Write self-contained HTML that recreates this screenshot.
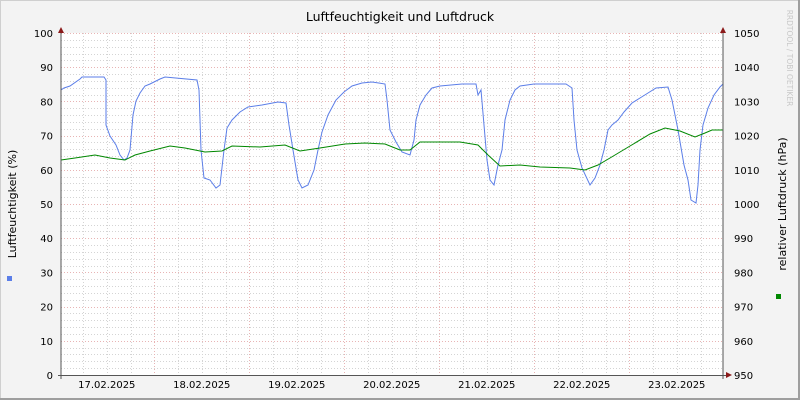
<!DOCTYPE html>
<html><head><meta charset="utf-8"><style>
html,body{margin:0;padding:0;background:#f3f3f3}
svg{display:block}
text{font-family:"DejaVu Sans","Liberation Sans",sans-serif;}
</style></head><body>
<svg width="800" height="400" viewBox="0 0 800 400" xmlns="http://www.w3.org/2000/svg">
<rect x="0" y="0" width="800" height="400" fill="#f3f3f3"/>
<rect x="0.5" y="0.5" width="798" height="398" fill="none" stroke="#cfcfcf"/>
<line x1="0" y1="399" x2="800" y2="399" stroke="#9e9e9e" stroke-width="2"/>
<line x1="799" y1="0" x2="799" y2="400" stroke="#9e9e9e" stroke-width="2"/>
<rect x="61" y="33" width="662" height="342" fill="#ffffff"/>
<g id="minor" stroke="#d4d4d4" stroke-dasharray="1,2" stroke-width="1"></g>
<g id="major" stroke="#e8b4b4" stroke-dasharray="1,2" stroke-width="1"></g>
<polyline id="hum" fill="none" stroke="#5b7ee8" stroke-width="1"/>
<polyline id="pres" fill="none" stroke="#008800" stroke-width="1"/>
<line x1="61" y1="30" x2="61" y2="379" stroke="#555"/>
<line x1="723" y1="30" x2="723" y2="379" stroke="#555"/>
<line x1="58" y1="375.5" x2="727" y2="375.5" stroke="#555"/>
<polygon points="58,33 64,33 61,27" fill="#8b1a1a"/>
<polygon points="720,33 726,33 723,27" fill="#8b1a1a"/>
<polygon points="726,372 726,378 732,375" fill="#8b1a1a"/>
<text x="400" y="21" font-size="12.5" text-anchor="middle" fill="#000">Luftfeuchtigkeit und Luftdruck</text>
<g font-size="10" fill="#000" text-anchor="end" id="ll"></g>
<g font-size="10" fill="#000" id="rl"></g>
<g font-size="10" fill="#000" text-anchor="middle" id="xl"></g>
<text transform="translate(16,204) rotate(-90)" font-size="11" text-anchor="middle">Luftfeuchtigkeit (%)</text>
<text transform="translate(786,204) rotate(-90)" font-size="11" text-anchor="middle">relativer Luftdruck (hPa)</text>
<text transform="translate(787,58) rotate(90)" font-size="7.5" fill="#c8c8c8" text-anchor="middle">RRDTOOL / TOBI OETIKER</text>
<rect x="7" y="276" width="5" height="5" fill="#5b7ee8"/>
<rect x="776" y="294" width="5" height="5" fill="#008800"/>
</svg>
<script>
(function(){
var NS="http://www.w3.org/2000/svg";
function el(p,t,a,txt){var e=document.createElementNS(NS,t);for(var k in a)e.setAttribute(k,a[k]);if(txt)e.textContent=txt;document.getElementById(p).appendChild(e);}
var T=33,B=375,ppu=3.42;
for(var v=0;v<=100;v+=2){var y=Math.round(B-v*ppu)+0.5;if(v%10)el('minor','line',{x1:61,x2:723,y1:y,y2:y});else if(v>0)el('major','line',{x1:61,x2:723,y1:y,y2:y});}
var d=95,x0=59.3;
for(var i=0;i<=28;i++){var x=Math.round(x0+i*d/4)+0.5;if(x<=62||x>=722)continue;if(i%4)el('minor','line',{x1:x,x2:x,y1:T,y2:B});else el('major','line',{x1:x,x2:x,y1:T,y2:B});}
for(var w=0;w<=100;w+=10){var yy=B-w*ppu+4;el('ll','text',{x:53,y:yy},String(w));el('rl','text',{x:734,y:yy},String(950+w));}
var days=['17','18','19','20','21','22','23'];
days.forEach(function(s,j){el('xl','text',{x:x0+d/2+j*d,y:388},s+'.02.2025');});
var hum=[[61,90],[64,88],[70,86],[80,79],[82,77],[104,77],[106,80],[106,125],[110,136],[116,145],[120,155],[124,160],[127,158],[130,150],[133,115],[136,101],[140,93],[145,86],[150,84],[160,79],[165,77],[197,80],[199,90],[201,150],[204,178],[210,180],[216,188],[220,185],[224,150],[227,128],[232,120],[240,112],[248,107],[262,105],[278,102],[286,103],[289,125],[293,150],[298,180],[302,188],[308,185],[314,170],[318,150],[322,132],[328,115],[336,100],[344,92],[352,86],[362,83],[372,82],[385,84],[387,100],[390,130],[396,142],[402,152],[410,155],[414,140],[416,120],[420,105],[426,95],[432,88],[440,86],[462,84],[476,84],[478,95],[481,90],[484,125],[487,160],[490,180],[494,185],[498,165],[502,150],[505,120],[510,100],[515,90],[520,86],[534,84],[566,84],[572,88],[574,120],[577,150],[582,168],[590,185],[595,178],[600,165],[604,150],[608,130],[612,125],[618,120],[624,112],[632,103],[640,98],[648,93],[656,88],[668,87],[672,100],[678,130],[684,165],[688,180],[691,200],[696,203],[698,185],[700,150],[703,125],[708,108],[714,95],[720,87],[723,84]];
document.getElementById('hum').setAttribute('points',hum.map(function(p){return p.join(',');}).join(' '));
var pres=[[61,160],[75,158],[95,155],[110,158],[125,160],[135,155],[150,151],[170,146],[185,148],[205,152],[222,151],[232,146],[260,147],[285,145],[300,151],[320,148],[345,144],[365,143],[385,144],[400,150],[410,150],[420,142],[460,142],[478,145],[488,155],[500,166],[520,165],[540,167],[570,168],[585,170],[598,165],[610,158],[630,146],[650,134],[665,128],[680,131],[695,137],[705,133],[712,130],[723,130]];
document.getElementById('pres').setAttribute('points',pres.map(function(p){return p.join(',');}).join(' '));
})();
</script>
</body></html>
